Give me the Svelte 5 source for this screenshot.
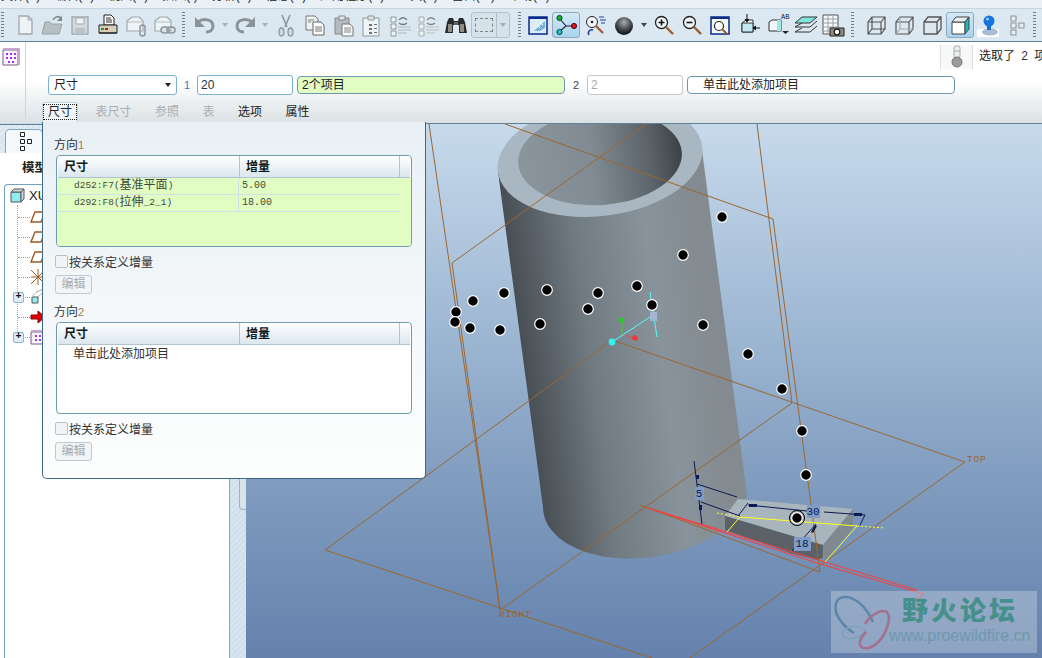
<script>
  const menus = ["文件(F)", "编辑(E)", "视图(V)", "插入(I)", "分析(A)", "信息(N)", "应用程序(P)", "工具(T)", "窗口(W)", "帮助(H)"];
  const dots = [
    [722, 217], [683, 255], [637, 286], [598, 293], [547, 290], [504, 293], [473, 301], [456, 312],
    [455, 322], [470, 328], [500, 330], [540, 324], [588, 309], [652, 305], [703, 325], [748, 354],
    [782, 389], [802, 431], [806, 475], [797, 518]
  ];
  const planeLines = [
    "M429 124L500 610",
    "M452 263L500 610",
    "M452 263L646 124",
    "M505 124L773 219L820 572",
    "M757 124L792 403",
    "M612 340L965 462L690 658",
    "M612 340L325 550L652 658",
    "M792 403L500 610",
    "M640 505L820 572"
  ];
  const tabs = [
    { label: "尺寸", on: true, cur: true },
    { label: "表尺寸" },
    { label: "参照" },
    { label: "表" },
    { label: "选项", on: true },
    { label: "属性", on: true }
  ];
  const rows = [
    { kind: "plane" }, { kind: "plane" }, { kind: "plane" }, { kind: "csys" },
    { kind: "part", plus: true }, { kind: "arrow" }, { kind: "pattern", plus: true }
  ];
</script>

<div class="app">
  <div class="menubar">
    {#each menus as m}<span>{m}</span>{/each}
  </div>

  <div class="toolbar">
    <i class="grip"></i>
    <span class="tb ml6"><svg viewBox="0 0 24 24"><path d="M6 3h9l4 4v14H6z" fill="#eef3f6" stroke="#a0a8ad" stroke-width="1.3"/><path d="M15 3v4h4" fill="none" stroke="#a0a8ad"/></svg></span>
    <span class="tb t27"><svg viewBox="0 0 24 24"><path d="M1 21l3-12h5l2 2h10l-3 10z" fill="#b8bfc3" stroke="#9aa2a7"/><path d="M12 7c2-4 6-4 8-2" fill="none" stroke="#7f878c" stroke-width="1.6"/><path d="M21 3v5h-5z" fill="#7f878c"/></svg></span>
    <span class="tb"><svg viewBox="0 0 24 24"><path d="M4 4h16v17H4z" fill="#d3dade" stroke="#a0a8ad" stroke-width="1.3"/><path d="M8 5h8v6H8z" fill="#eef2f4" stroke="#a9b0b5"/><path d="M7 15h10v6H7z" fill="#bcc3c8"/></svg></span>
    <span class="tb"><svg viewBox="0 0 24 24"><path d="M8 2h7l3 3v7H8z" fill="#fff" stroke="#222"/><path d="M10 5h5M10 7h6M10 9h6" stroke="#333"/><path d="M3 12h18v8H3z" fill="#d5cfb8" stroke="#222"/><path d="M5 15h3v2H5z" fill="#1a9c3a"/><path d="M9 15h3v2H9z" fill="#b02020"/><path d="M3 20h18" stroke="#333" stroke-width="1.5"/></svg></span>
    <span class="tb"><svg viewBox="0 0 24 24"><path d="M3 8l5-4h7l4 4v10H3z" fill="#eef3f6" stroke="#a0a8ad" stroke-width="1.2"/><path d="M3 9h16" stroke="#b5bcc0"/><rect x="16" y="12" width="5" height="11" rx="2.5" fill="none" stroke="#8f979c" stroke-width="1.5"/></svg></span>
    <span class="tb t27"><svg viewBox="0 0 24 24"><path d="M3 8l5-4h7l4 4v10H3z" fill="#eef3f6" stroke="#a0a8ad" stroke-width="1.2"/><path d="M3 9h16" stroke="#b5bcc0"/><rect x="9" y="14" width="8" height="6" rx="3" fill="#dde5ea" stroke="#8f979c" stroke-width="1.5"/><rect x="15" y="14" width="8" height="6" rx="3" fill="none" stroke="#8f979c" stroke-width="1.5"/></svg></span>
    <i class="grip g1"></i>
    <span class="tb ml5"><svg viewBox="0 0 24 24"><path d="M5 9c5-4 15-3 15 4 0 4-3 6-7 6" fill="none" stroke="#8b9398" stroke-width="3"/><path d="M2 4v10h10z" fill="#8b9398"/></svg></span>
    <span class="dd"></span>
    <span class="tb"><svg viewBox="0 0 24 24"><path d="M19 9c-5-4-15-3-15 4 0 4 3 6 7 6" fill="none" stroke="#8b9398" stroke-width="3"/><path d="M22 4v10H12z" fill="#8b9398"/></svg></span>
    <span class="dd"></span>
    <span class="tb ml1"><svg viewBox="0 0 24 24"><path d="M8 2l5 12M16 2l-5 12" stroke="#8f979c" stroke-width="1.6"/><ellipse cx="7.500" cy="19" rx="2.500" ry="4" fill="#cfd6da" stroke="#8f979c" stroke-width="1.3"/><ellipse cx="16.500" cy="19" rx="2.500" ry="4" fill="#cfd6da" stroke="#8f979c" stroke-width="1.3"/></svg></span>
    <span class="tb ml1"><svg viewBox="0 0 24 24"><path d="M3 3h9l3 3v11H3z" fill="#eef3f6" stroke="#777"/><path d="M10 9h8l3 3v10H10z" fill="#fff" stroke="#666"/><path d="M12 14h7M12 16h7M12 18h7M5 7h6M5 9h3" stroke="#777"/></svg></span>
    <span class="tb"><svg viewBox="0 0 24 24"><path d="M4 5h14v16H4z" fill="#b5bcc0" stroke="#888"/><path d="M8 3h6v4H8z" fill="#dfe4e7" stroke="#888"/><path d="M11 11h8l3 3v9H11z" fill="#f7f9fa" stroke="#777"/><path d="M13 15h7M13 17h7M13 19h7" stroke="#888"/></svg></span>
    <span class="tb"><svg viewBox="0 0 24 24"><path d="M4 5h16v18H4z" fill="#eef3f6" stroke="#8f979c"/><path d="M9 3h6v4H9z" fill="#dfe4e7" stroke="#8f979c"/><path d="M10 11h3v2h-3zM15 11h3v1h-3zM10 15h3v2h-3zM15 15h3v1h-3zM10 19h3v2h-3zM15 19h3v1h-3z" fill="#6d7479"/></svg></span>
    <span class="tb ml1"><svg viewBox="0 0 24 24"><path d="M3 4h5v5H3zM3 11h5v5H3zM3 18h5v5H3z" fill="#eef3f6" stroke="#8f979c"/><path d="M11 7c2-3 6-3 8 0M19 10c-2 2-6 2-8 0" fill="none" stroke="#737b80" stroke-width="1.3"/><path d="M10 14h13M10 17h13M10 20h9" stroke="#b1b8bd"/></svg></span>
    <span class="tb"><svg viewBox="0 0 24 24"><path d="M3 4h5v5H3zM3 11h5v5H3zM3 18h5v5H3z" fill="#eef3f6" stroke="#a3abb0"/><path d="M11 7c2-3 6-3 8 0M19 10c-2 2-6 2-8 0" fill="none" stroke="#7f878c" stroke-width="1.3"/><path d="M10 14h13M10 17h13M10 20h9" stroke="#b9c0c4"/></svg></span>
    <span class="tb"><svg viewBox="0 0 24 24"><path d="M3 9l2-4h4l1 3h4l1-3h4l2 4 2 11h-8v-8h-6v8H1z" fill="#2b2b2b"/><path d="M4 11h4v8H4zM16 11h4v8h-4z" fill="#8c8c84"/><path d="M10 9h4v3h-4z" fill="#666"/></svg></span>
    <span class="selbox">
      <span class="selinner"></span>
      <span class="seldd"></span>
    </span>
    <i class="grip g2"></i>
    <span class="tb ml3"><svg viewBox="0 0 24 24"><path d="M3 4h18v17H3z" fill="#dcecf8" stroke="#0a2a8c" stroke-width="1.5"/><path d="M3 4h18v2H3z" fill="#0a2a8c"/><path d="M8 18L19 8v7l-5 3z" fill="#7bb1d6"/><path d="M14 9l3 3M11 12l3 3" stroke="#fff"/></svg></span>
    <span class="tb active"><svg viewBox="0 0 24 24"><path d="M5 5l7 8-7 6M12 13h7" fill="none" stroke="#223" stroke-width="1.1"/><circle cx="5.500" cy="5" r="2.600" fill="#12b52c" stroke="#143"/><circle cx="5.500" cy="19" r="2.600" fill="#22c4c4" stroke="#143"/><circle cx="20" cy="13" r="2.600" fill="#e01414" stroke="#411"/></svg></span>
    <span class="tb ml2"><svg viewBox="0 0 24 24"><circle cx="8" cy="9" r="5.500" fill="#f2f6f8" stroke="#222"/><circle cx="8" cy="9" r="1.300" fill="#222"/><path d="M12 13l7 7" stroke="#9c5a2a" stroke-width="2.200"/><path d="M15 4h5M16 7h6M17 10h4" stroke="#2238a0"/><path d="M5 22c-2-3 1-6 4-5" fill="none" stroke="#2238a0" stroke-width="1.500"/></svg></span>
    <span class="tb"><svg viewBox="0 0 24 24"><defs><radialGradient id="ball" cx="0.500" cy="0.300" r="0.650"><stop offset="0" stop-color="#a7adb2"/><stop offset="0.500" stop-color="#555a5e"/><stop offset="1" stop-color="#141516"/></radialGradient></defs><circle cx="12" cy="13" r="9" fill="url(#ball)"/></svg></span>
    <span class="dd dark"></span>
    <span class="tb"><svg viewBox="0 0 24 24"><circle cx="9.500" cy="9.500" r="6" fill="#f4f7f9" stroke="#222" stroke-width="1.300"/><path d="M6.500 9.500h6M9.500 6.500v6" stroke="#111" stroke-width="1.600"/><path d="M14 14l7 7" stroke="#9c5a2a" stroke-width="2.400"/></svg></span>
    <span class="tb"><svg viewBox="0 0 24 24"><circle cx="9.500" cy="9.500" r="6" fill="#f4f7f9" stroke="#222" stroke-width="1.300"/><path d="M6.500 9.500h6" stroke="#111" stroke-width="1.600"/><path d="M14 14l7 7" stroke="#9c5a2a" stroke-width="2.400"/></svg></span>
    <span class="tb"><svg viewBox="0 0 24 24"><path d="M3 4h18v17H3z" fill="#f5f8fa" stroke="#0a2a8c" stroke-width="1.500"/><path d="M3 4h18v2H3z" fill="#0a2a8c"/><circle cx="11" cy="13" r="4.500" fill="#fff" stroke="#222" stroke-width="1.200"/><path d="M14 16l5 5" stroke="#9c5a2a" stroke-width="2"/></svg></span>
    <span class="tb ml1"><svg viewBox="0 0 24 24"><path d="M5 10l4-3h7v12H5z" fill="#fff" stroke="#333"/><path d="M5 10h11v9H5z" fill="#bfeaf0" stroke="#333"/><path d="M10 1v7M8 6l2 3 2-3" stroke="#111" fill="#111"/><path d="M23 15h-6M19 13l-3 2 3 2" stroke="#111" fill="#111"/></svg></span>
    <span class="tb ml2"><svg viewBox="0 0 24 24"><path d="M2 9l3-2h9v11H2z" fill="#f4f7f9" stroke="#333"/><path d="M10 7h4v11h-4z" fill="#9fe6e6"/><text x="14" y="6" class="ab">AB</text><path d="M15 18h7l-3.500 3z" fill="#222"/></svg></span>
    <span class="tb t26"><svg viewBox="0 0 24 24"><path d="M1 10l7-6h15l-7 6z" fill="#82e6df" stroke="#333"/><path d="M1 14l7-4M1 14h15l7-6M1 19l7-4M1 19h15l7-6" fill="none" stroke="#333"/></svg></span>
    <span class="tb"><svg viewBox="0 0 24 24"><path d="M2 2h15v19H2z" fill="#f7f9fa" stroke="#555"/><path d="M2 6h15M2 10h15M2 14h15M2 18h15M7 2v19M12 2v19" stroke="#9aa1a6"/><path d="M9 15h14v8H9z" fill="#8e8a7b" stroke="#222"/><circle cx="16" cy="19" r="2.800" fill="#fff" stroke="#222" stroke-width="1.300"/></svg></span>
    <i class="grip g3"></i>
    <span class="tb ml4"><svg viewBox="0 0 24 24" fill="none" stroke="#555" stroke-width="1.200"><path d="M4 9h13v12H4zM8 4h13v12H8zM4 9l4-5M17 9l4-5M4 21l4-5M17 21l4-5"/></svg></span>
    <span class="tb"><svg viewBox="0 0 24 24" fill="none" stroke="#555" stroke-width="1.200"><path d="M4 9h13v12H4zM4 9l4-5h13v12l-4 5M17 9l4-5"/><path d="M8 4v12h13M4 21l4-5" stroke="#aaa"/></svg></span>
    <span class="tb"><svg viewBox="0 0 24 24" fill="none" stroke="#555" stroke-width="1.300"><path d="M4 9h13v12H4zM4 9l4-5h13v12l-4 5M17 9l4-5"/></svg></span>
    <span class="tb active"><svg viewBox="0 0 24 24"><path d="M4 9h13v12H4z" fill="#fff" stroke="#444"/><path d="M4 9l4-5h13l-4 5z" fill="#e8eef0" stroke="#444"/><path d="M17 9l4-5v12l-4 5z" fill="#27b6b6" stroke="#444"/></svg></span>
    <span class="tb"><svg viewBox="0 0 24 24"><path d="M1 16h22v8H1z" fill="#fff"/><ellipse cx="14" cy="19" rx="8" ry="3.500" fill="#a9bbd2"/><path d="M11 11v6h4v-6z" fill="#1a6fd0"/><circle cx="13" cy="8" r="5.500" fill="#1674e0"/><circle cx="11.500" cy="6" r="1.600" fill="#8fc4f8"/></svg></span>
    <span class="tb"><svg viewBox="0 0 24 24" fill="#e8eef2" stroke="#8d959a" stroke-width="1.100"><path d="M7 3h5v5H7zM7 10h5v5H7zM7 17h5v5H7zM15 10h5v5h-5z"/></svg></span>
    <i class="grip g4"></i>
  </div>

  <div class="dash">
    <div class="dash-icon">
      <svg width="19" height="19" viewBox="0 0 19 19"><path d="M1 3h15v15H1z" fill="#fdf6ff" stroke="#7b5a80"/><path d="M1 1h17v2H1zM16 3h2v15h-2z" fill="#c7a6cf"/><path d="M4 6h2v2H4zM8 6h2v2H8zM12 6h2v2h-2zM4 10h2v2H4zM8 10h2v2H8zM12 10h2v2h-2zM6 14h2v2H6zM10 14h2v2h-2z" fill="#a432e0"/></svg>
    </div>
    <div class="dash-main">
      <div class="status">
        <span class="status-ic">
          <svg width="14" height="24" viewBox="0 0 14 24"><rect x="4" y="1" width="6" height="12" rx="2" fill="#eceff1" stroke="#a9a9a9"/><path d="M4 6h6" stroke="#a9a9a9"/><circle cx="7" cy="17" r="5" fill="#9a9a9a" stroke="#777"/></svg>
        </span>
        <span class="status-txt">选取了 <b>2</b> 项目</span>
      </div>
      <div class="fields">
        <div class="select">尺寸<i class="caret"></i></div>
        <span class="num n1">1</span>
        <input class="inp" value="20" />
        <div class="collect green">2个项目</div>
        <span class="num n2">2</span>
        <input class="inp off" value="2" disabled />
        <div class="collect blank">单击此处添加项目</div>
      </div>
      <div class="tabs">
        {#each tabs as t}
          <span class="tab" class:on={t.on} class:cur={t.cur}>{t.label}</span>
        {/each}
      </div>
    </div>
  </div>

  <div class="work">
    <aside class="nav">
      <div class="nav-tabs">
        <span class="nav-tab">
          <svg width="17" height="21" viewBox="0 0 17 21" fill="#fff" stroke="#222"><path d="M4.500 1.500h4v4h-4zM4.500 8.500h4v4h-4zM4.500 15.500h4v4h-4zM11.500 8.500h4v4h-4z"/></svg>
        </span>
      </div>
      <div class="nav-body">
        <div class="nav-title">模型树</div>
        <div class="tree">
          <div class="root">
            <svg width="15" height="15" viewBox="0 0 15 15"><path d="M1 4h10v10H1z" fill="#8eeef2" stroke="#555"/><path d="M1 4l3-3h10l-3 3zM11 4l3-3v10l-3 3z" fill="#cfd8dc" stroke="#555"/></svg>
            <span>XUANZHUAN.PRT</span>
          </div>
          <div class="kids">
            {#each rows as r}
              <div class="row">
                <i class="conn"></i>
                {#if r.plus}<b class="plus">+</b>{/if}
                {#if r.kind === "plane"}
                  <svg width="16" height="14" viewBox="0 0 16 14"><path d="M5 2h10l-4 10H1z" fill="#fff" stroke="#9c5a22" stroke-width="1.400"/></svg>
                {:else if r.kind === "csys"}
                  <svg width="16" height="18" viewBox="0 0 16 18" fill="none" stroke="#9c5a22"><path d="M1 2l14 14M15 2L1 16M8 1v16M1 9h14"/></svg>
                {:else if r.kind === "part"}
                  <svg width="16" height="18" viewBox="0 0 16 18"><path d="M6 4l8-3" stroke="#aaa"/><path d="M2 9h6v6H2z" fill="#8eeef2" stroke="#555"/><path d="M2 9l5-6M8 9l6-6" stroke="#bbb"/></svg>
                {:else if r.kind === "arrow"}
                  <svg width="16" height="14" viewBox="0 0 16 14"><path d="M1 5h7V1l7 6-7 6V9H1z" fill="#e00000" stroke="#800"/></svg>
                {:else}
                  <svg width="16" height="16" viewBox="0 0 16 16"><path d="M1 3h13v12H1z" fill="#fdf6ff" stroke="#7b5a80"/><path d="M1 1h13v2H1z" fill="#c7a6cf"/><path d="M5 6h2v2H5zM9 6h2v2H9zM5 10h2v2H5zM9 10h2v2H9z" fill="#a432e0"/></svg>
                {/if}
              </div>
            {/each}
          </div>
        </div>
      </div>
    </aside>

    <div class="sash"><i class="thumb"></i></div>

    <div class="view">
      <svg class="scene" width="796" height="534" viewBox="246 124 796 534">
        <defs>
          <linearGradient id="bg" x1="0" y1="0" x2="0" y2="1">
            <stop offset="0" stop-color="#c7daec"/>
            <stop offset="0.44" stop-color="#98b2cf"/>
            <stop offset="0.68" stop-color="#7f9bbe"/>
            <stop offset="1" stop-color="#6482ad"/>
          </linearGradient>
          <linearGradient id="body" gradientUnits="userSpaceOnUse" x1="499" y1="300" x2="704" y2="273">
            <stop offset="0" stop-color="#3f4549"/>
            <stop offset="0.12" stop-color="#4d545a"/>
            <stop offset="0.4" stop-color="#707a81"/>
            <stop offset="0.75" stop-color="#89939b"/>
            <stop offset="1" stop-color="#838b90"/>
          </linearGradient>
          <linearGradient id="hole" gradientUnits="userSpaceOnUse" x1="518" y1="160" x2="681" y2="150">
            <stop offset="0" stop-color="#8b959c"/>
            <stop offset="0.45" stop-color="#808b93"/>
            <stop offset="0.8" stop-color="#5c646a"/>
            <stop offset="1" stop-color="#3e4246"/>
          </linearGradient>
        </defs>
        <rect x="246" y="124" width="796" height="534" fill="url(#bg)"/>

        <path d="M498 172L543 507A103 60 -8 0 0 747 495L702 150z" fill="url(#body)"/>
        <ellipse cx="600" cy="159" rx="103" ry="57" transform="rotate(-7 600 159)" fill="#a9b7c2"/>
        <ellipse cx="600" cy="158" rx="82" ry="47" transform="rotate(-4 600 158)" fill="url(#hole)"/>

        <path d="M725 516L738 499L853 509L823 545z" fill="#a9b5bd"/>
        <path d="M725 516L823 545V558L817 560L790 553L725 530z" fill="#5a6268"/>
        <path d="M823 545L853 509V527L825 562z" fill="#7f898f"/>

        <g fill="none" stroke="#9c6630" stroke-width="1">
          {#each planeLines as d}<path {d}/>{/each}
        </g>
        <text x="967" y="462" class="plane-txt">TOP</text>
        <text x="499" y="617" class="plane-txt">RIGHT</text>

        <g fill="none" stroke="#ff3b3b" stroke-width="1">
          <path d="M648 508L917 590"/>
          <path d="M648 508L820 564L924 594L915 600"/>
        </g>

        <g fill="none" stroke="#ffff20" stroke-width="1">
          <path d="M740 517L857 526M740 517L727 532M857 526L825 562"/>
          <path d="M717 513L740 517M857 526L885 528" stroke-dasharray="2 2"/>
        </g>
        <g fill="none" stroke="#0c1a55" stroke-width="1">
          <path d="M694 461L702 524"/>
          <path d="M697 484L737 497M701 502L740 516"/>
          <path d="M748 503L738 516M748 505L807 511M824 512L865 515L860 525"/>
          <path d="M792 551L816 524"/>
        </g>
        <g fill="#0c1a55">
          <rect x="696" y="475" width="3" height="4"/>
          <rect x="699" y="505" width="3" height="5"/>
          <rect x="749" y="504" width="8" height="3"/>
          <rect x="854" y="513" width="8" height="3"/>
          <path d="M811 532l4-7 2 1-4 7z"/>
        </g>
        <rect x="695" y="487" width="9" height="13" fill="#7f9cc6"/>
        <text x="699" y="497" class="dim">5</text>
        <rect x="807" y="505" width="13" height="13" fill="#7f9cc6"/>
        <text x="813" y="515" class="dim">30</text>
        <rect x="794" y="537" width="17" height="14" fill="#7f9cc6"/>
        <text x="802" y="547" class="dim">18</text>

        <g stroke="#5ff" fill="none">
          <path d="M612 342L653 315M650 292L657 337"/>
        </g>
        <rect x="650" y="312" width="7" height="9" fill="#a3b6d4"/>
        <path d="M622 321V335" stroke="#2ed12e"/>
        <path d="M626 335c3 2 6 3 9 3" stroke="#f04040" fill="none"/>
        <circle cx="621" cy="320" r="2.500" fill="#25d025"/>
        <circle cx="635" cy="338" r="2.700" fill="#f03838"/>
        <circle cx="612" cy="342" r="3.400" fill="#2ff2f2"/>

        {#each dots as [x, y]}
          <circle cx={x} cy={y} r="5.300" fill="#000" stroke="#fff" stroke-width="1.200"/>
        {/each}
        <circle cx="797" cy="518" r="7.500" fill="none" stroke="#000" stroke-width="1"/>
      </svg>

      <div class="mark">
        <svg class="mark-logo" width="58" height="60" viewBox="0 0 58 60" fill="none" stroke-width="2.500">
          <path d="M39 30C32 14 20 4 10 5C0 6 -1 18 6 28C10 34 15 38 20 41" stroke="#5c85aa"/>
          <path d="M8 42C10 34 24 32 32 38C30 44 14 52 8 42" stroke="#7fa0bd" stroke-width="1.500"/>
          <path d="M31 32C37 22 48 17 53 20C58 26 52 44 42 52C36 57 28 58 26 53C25 48 28 44 32 40" stroke="#a56f8e"/>
        </svg>
        <div class="mark-txt">
          <div class="mark-cn">野火论坛</div>
          <div class="mark-url">www.proewildfire.cn</div>
        </div>
      </div>
    </div>
  </div>

  <section class="panel">
    <div class="sub">方向<span class="idx">1</span></div>
    <div class="tbl">
      <div class="thead"><span class="c1">尺寸</span><span class="c2">增量</span><span class="c3"></span></div>
      <div class="tbody green">
        <div class="trow"><span class="c1 mono">d252:F7(<span class="cjk">基准平面</span>)</span><span class="c2 mono">5.00</span></div>
        <div class="trow"><span class="c1 mono">d292:F8(<span class="cjk">拉伸</span>_2_1)</span><span class="c2 mono">18.00</span></div>
      </div>
    </div>
    <label class="chk"><i></i>按关系定义增量</label>
    <div class="btn">编辑</div>

    <div class="sub second">方向<span class="idx">2</span></div>
    <div class="tbl">
      <div class="thead"><span class="c1">尺寸</span><span class="c2">增量</span><span class="c3"></span></div>
      <div class="tbody">
        <div class="hint">单击此处添加项目</div>
      </div>
    </div>
    <label class="chk"><i></i>按关系定义增量</label>
    <div class="btn">编辑</div>
  </section>
</div>

<style>
  :global(body) {
    margin: 0;
    background: #fff;
  }

  .app {
    position: relative;
    width: 1042px;
    height: 658px;
    overflow: hidden;
    font-family: "Liberation Sans", "Noto Sans CJK SC", sans-serif;
    font-size: 12px;
    color: #222;
    display: flex;
    flex-direction: column;
  }

  .menubar {
    height: 8px;
    flex-shrink: 0;
    background: #e9f0f6;
    overflow: hidden;
    display: flex;
    gap: 14px;
    padding-left: 1px;
    line-height: 14px;
  }

  .menubar span {
    margin-top: -11px;
    white-space: nowrap;
    font-size: 12px;
  }

  .toolbar {
    height: 32px;
    flex-shrink: 0;
    display: flex;
    align-items: center;
    background: #dbe8f2;
    border-top: 1px solid #c3d6e2;
    border-bottom: 1px solid #5e8199;
    box-sizing: content-box;
  }

  .grip {
    width: 3px;
    height: 26px;
    margin-left: 1px;
    flex-shrink: 0;
    background: repeating-linear-gradient(#6b7f8c 0 1px, transparent 1px 3px);
  }

  .g1 { margin-left: 5px; }
  .g2 { margin-left: 8px; }
  .g3 { margin-left: 4px; }
  .g4 { margin-left: 3px; }
  .ml6 { margin-left: 7px; }
  .ml5 { margin-left: 6px; }
  .ml3 { margin-left: 3px; }
  .ml4 { margin-left: 8px; }
  .ml2 { margin-left: 2px; }
  .ml1 { margin-left: 1px; }

  .tb {
    width: 28px;
    height: 26px;
    flex-shrink: 0;
    display: flex;
    align-items: center;
    justify-content: center;
    box-sizing: border-box;
    border-radius: 3px;
  }

  .tb.t27 { width: 27px; }
  .tb.t26 { width: 26px; }

  .tb svg {
    width: 24px;
    height: 24px;
  }

  .tb.active {
    background: linear-gradient(#d4e9f8, #a8d3f0);
    border: 1px solid #8fa9bb;
  }

  .ab {
    font-family: "Liberation Mono", monospace;
    font-size: 7px;
    fill: #222;
  }

  .dd {
    width: 12px;
    flex-shrink: 0;
    display: flex;
    justify-content: center;
  }

  .dd::after {
    content: "";
    border: 3.500px solid transparent;
    border-top: 4px solid #aab2b8;
    border-bottom: 0;
  }

  .dd.dark::after {
    border-top-color: #444;
  }

  .selbox {
    width: 39px;
    height: 26px;
    margin-left: 1px;
    flex-shrink: 0;
    box-sizing: border-box;
    border: 1px solid #b3c1cb;
    border-radius: 3px;
    display: flex;
    background: #d5e2ea;
  }

  .selinner {
    flex: 1;
    position: relative;
    border-right: 1px solid #b3c1cb;
  }

  .selinner::after {
    content: "";
    position: absolute;
    inset: 5px 3px;
    border: 1px dashed #7b868d;
  }

  .seldd {
    width: 12px;
    display: flex;
    align-items: center;
    justify-content: center;
  }

  .seldd::after {
    content: "";
    border: 3.500px solid transparent;
    border-top: 4px solid #a5aeb4;
    border-bottom: 0;
  }

  .dash {
    height: 82px;
    flex-shrink: 0;
    display: flex;
    background: linear-gradient(#fff 0, #fff 48%, #dbe1e4 100%);
    border-bottom: 1px solid #c9dbe6;
    box-sizing: border-box;
  }

  .dash-icon {
    width: 26px;
    flex-shrink: 0;
    box-sizing: border-box;
    padding: 5px 0 0 2px;
    margin-bottom: 4px;
    border-right: 1px solid #cfd6da;
  }

  .dash-main {
    flex: 1;
    padding-left: 22px;
    min-width: 0;
  }

  .status {
    height: 33px;
    display: flex;
    justify-content: flex-start;
    align-items: flex-start;
    gap: 6px;
    padding: 3px 0 0 892px;
    box-sizing: border-box;
    margin-right: -60px;
    width: 1100px;
    overflow: hidden;
  }

  .status-ic {
    width: 31px;
    height: 24px;
    flex-shrink: 0;
    display: flex;
    justify-content: center;
    background: #f7f8f8;
    border-left: 1px solid #ddd;
    border-right: 1px solid #ddd;
  }

  .status-txt {
    white-space: nowrap;
    line-height: 22px;
  }

  .status-txt b {
    font-weight: normal;
    color: #334;
    margin: 0 3px;
  }

  .fields {
    display: flex;
    align-items: center;
    height: 20px;
  }

  .select {
    width: 129px;
    height: 20px;
    box-sizing: border-box;
    padding-left: 5px;
    background: #fff;
    border: 1px solid #7ab0d0;
    border-radius: 3px;
    line-height: 18px;
    position: relative;
  }

  .caret {
    position: absolute;
    right: 5px;
    top: 7px;
    border: 3px solid transparent;
    border-top: 4px solid #222;
    border-bottom: 0;
  }

  .num {
    text-align: center;
    font-size: 11px;
    color: #445;
  }

  .n1 { width: 20px; color: #4b7aa5; }
  .n2 { width: 22px; }

  .inp {
    width: 96px;
    height: 20px;
    box-sizing: border-box;
    padding: 0 3px;
    border: 1px solid #7ab0d0;
    border-radius: 3px;
    font: inherit;
    color: #234;
    background: #fff;
    outline: none;
  }

  .inp.off {
    border-color: #c4c8ca;
    color: #aaa;
  }

  .collect {
    width: 268px;
    height: 18px;
    box-sizing: border-box;
    border: 1px solid #6b9ab0;
    border-radius: 4px;
    line-height: 16px;
    margin-left: 4px;
  }

  .collect.green {
    background: #e2fdc4;
    padding-left: 4px;
  }

  .collect.blank {
    background: #fff;
    padding-left: 15px;
  }

  .tabs {
    display: flex;
    gap: 23.500px;
    margin-top: 7px;
    height: 20px;
    line-height: 20px;
  }

  .tab {
    color: #a9afb2;
    white-space: nowrap;
    position: relative;
    z-index: 0;
  }

  .tab.on { color: #222; }

  .tab.cur::before {
    content: "";
    position: absolute;
    z-index: -1;
    inset: 0 -6px -3px -6px;
    background: linear-gradient(#f6f9fb, #eaf1f5);
    border: 1px solid #c4d7e2;
    border-bottom: 0;
    border-radius: 3px 3px 0 0;
  }

  .tab.cur::after {
    content: "";
    position: absolute;
    inset: 2px -5px 2px -5px;
    border: 1px dotted #222;
  }

  .work {
    flex: 1;
    min-height: 0;
    display: flex;
  }

  .nav {
    width: 229px;
    flex-shrink: 0;
    background: #fff;
    display: flex;
    flex-direction: column;
  }

  .nav-tabs {
    height: 29px;
    flex-shrink: 0;
    box-sizing: border-box;
    padding: 4px 0 0 5px;
    background: repeating-linear-gradient(135deg, #d8e4ec 0 2px, #e2ebf1 2px 4px);
    border-top: 1px solid #5e8199;
  }

  .nav-tab {
    display: flex;
    justify-content: center;
    align-items: center;
    width: 38px;
    height: 24px;
    background: #f6f9fb;
    border: 1px solid #7fa8bd;
    border-bottom: 0;
    border-radius: 5px 5px 0 0;
    box-sizing: border-box;
  }

  .nav-body {
    flex: 1;
    min-height: 0;
    display: flex;
    flex-direction: column;
  }

  .nav-title {
    height: 31px;
    flex-shrink: 0;
    padding-left: 22px;
    line-height: 30px;
    font-weight: 700;
    font-size: 12.500px;
  }

  .tree {
    flex: 1;
    margin-left: 4px;
    border: 1px solid #72a5bd;
    border-right: 0;
    border-bottom: 0;
    border-radius: 4px 0 0 0;
    padding-top: 0;
  }

  .root {
    height: 20px;
    display: flex;
    align-items: center;
    gap: 4px;
    padding-left: 5px;
    font-size: 13px;
    white-space: nowrap;
  }

  .kids {
    margin: 0 0 0 12px;
    border-left: 1px dotted #9aa;
    height: 132px;
    padding-top: 2px;
  }

  .row {
    height: 20px;
    display: flex;
    align-items: center;
    position: relative;
  }

  .conn {
    width: 12px;
    border-top: 1px dotted #999;
    flex-shrink: 0;
  }

  .plus {
    position: absolute;
    left: -5px;
    top: 5px;
    width: 9px;
    height: 9px;
    background: #dcedf6;
    border: 1px solid #8cb2c6;
    border-radius: 2px;
    font: 700 10px/8px "Liberation Mono", monospace;
    text-align: center;
    color: #111;
  }

  .sash {
    width: 17px;
    flex-shrink: 0;
    box-sizing: border-box;
    border-left: 1px solid #7fa8bd;
    background: repeating-linear-gradient(135deg, #cfe0ea 0 2px, #d6e5ee 2px 4px);
    position: relative;
  }

  .thumb {
    position: absolute;
    left: 9px;
    right: 0;
    top: 0;
    height: 386px;
    background: #d9e3ea;
    border: 1px solid #9fb3c0;
    border-right: 0;
    border-radius: 0 0 0 4px;
    box-sizing: border-box;
  }

  .view {
    flex: 1;
    min-width: 0;
    position: relative;
    border-top: 1px solid #5e8199;
    margin-top: -1px;
  }

  .scene {
    display: block;
  }

  .plane-txt {
    font-family: "Liberation Mono", monospace;
    font-size: 9.500px;
    letter-spacing: 0.800px;
    fill: #9c6630;
  }

  .dim {
    font-family: "Liberation Mono", monospace;
    font-size: 11px;
    fill: #0c1a55;
    text-anchor: middle;
  }

  .mark {
    position: absolute;
    left: 585px;
    top: 467px;
    width: 206px;
    height: 62px;
    display: flex;
    background: rgba(205, 214, 228, 0.4);
  }

  .mark-logo {
    margin: 1px 0 0 3px;
    flex-shrink: 0;
    overflow: visible;
  }

  .mark-txt {
    position: relative;
    flex: 1;
    min-width: 0;
  }

  .mark-cn {
    margin-left: 10px;
    font-family: "Noto Sans CJK SC", sans-serif;
    font-weight: 900;
    font-size: 26px;
    letter-spacing: 3px;
    line-height: 36px;
    color: #46908c;
    white-space: nowrap;
  }

  .mark-url {
    margin-left: -3px;
    font-size: 16px;
    line-height: 18px;
    color: #6e98ae;
    white-space: nowrap;
  }

  .panel {
    position: absolute;
    left: 42px;
    top: 122px;
    width: 384px;
    height: 357px;
    box-sizing: border-box;
    padding: 13px 13px 0 12px;
    background: linear-gradient(#e9f0f5, #fdfefe);
    border: 1px solid #3f6a85;
    border-top: 0;
    border-radius: 0 0 5px 5px;
    color: #333;
  }

  .sub {
    height: 20px;
    line-height: 20px;
    margin-left: -1px;
  }

  .sub.second {
    margin-top: 8px;
  }

  .idx {
    font-size: 11px;
    color: #a07a50;
  }

  .tbl {
    width: 356px;
    height: 92px;
    box-sizing: border-box;
    margin-left: 1px;
    border: 1px solid #6d9bb0;
    border-radius: 4px;
    background: #fff;
    overflow: hidden;
    display: flex;
    flex-direction: column;
  }

  .thead {
    height: 21px;
    flex-shrink: 0;
    display: flex;
    margin: 0 1px;
    background: linear-gradient(#fff, #dbe6ee);
    border-bottom: 1px solid #b0c4d2;
    font-weight: 700;
    color: #0c1a20;
    line-height: 22px;
  }

  .c1 {
    width: 181px;
    flex-shrink: 0;
    box-sizing: border-box;
    padding-left: 6px;
  }

  .thead .c2 {
    width: 160px;
    flex-shrink: 0;
    box-sizing: border-box;
    padding-left: 6px;
    border-left: 1px solid #b0c4d2;
  }

  .c3 {
    flex: 1;
    border-left: 1px solid #b0c4d2;
  }

  .tbody {
    flex: 1;
    min-height: 0;
  }

  .tbody.green {
    background: #e2fdc4;
  }

  .trow {
    height: 17px;
    width: 343px;
    display: flex;
    margin-left: 1px;
    border-bottom: 1px solid #cfe2e6;
    box-sizing: border-box;
    line-height: 16px;
    color: #3d4a3a;
  }

  .trow .c1 {
    padding-left: 16px;
    border-right: 1px solid #cfe2e6;
    white-space: nowrap;
  }

  .trow .c2 {
    padding-left: 3px;
    font-size: 10px;
  }

  .mono {
    font-family: "Liberation Mono", "Noto Sans CJK SC", monospace;
    font-size: 9.500px;
  }

  .cjk {
    font-size: 12px;
    line-height: 1;
    vertical-align: -1px;
  }

  .hint {
    padding-left: 16px;
    line-height: 19px;
    color: #333;
  }

  .chk {
    display: flex;
    align-items: center;
    height: 14px;
    margin-top: 7px;
    white-space: nowrap;
  }

  .chk i {
    width: 13px;
    height: 13px;
    box-sizing: border-box;
    border: 1px solid #b9c1c6;
    border-radius: 2px;
    background: #f2f5f7;
    margin-right: 1px;
  }

  .btn {
    width: 37px;
    height: 19px;
    box-sizing: border-box;
    margin-top: 7px;
    border: 1px solid #c2c9cd;
    border-radius: 3px;
    text-align: center;
    line-height: 17px;
    color: #a5abaf;
    background: #f1f5f7;
  }
</style>
